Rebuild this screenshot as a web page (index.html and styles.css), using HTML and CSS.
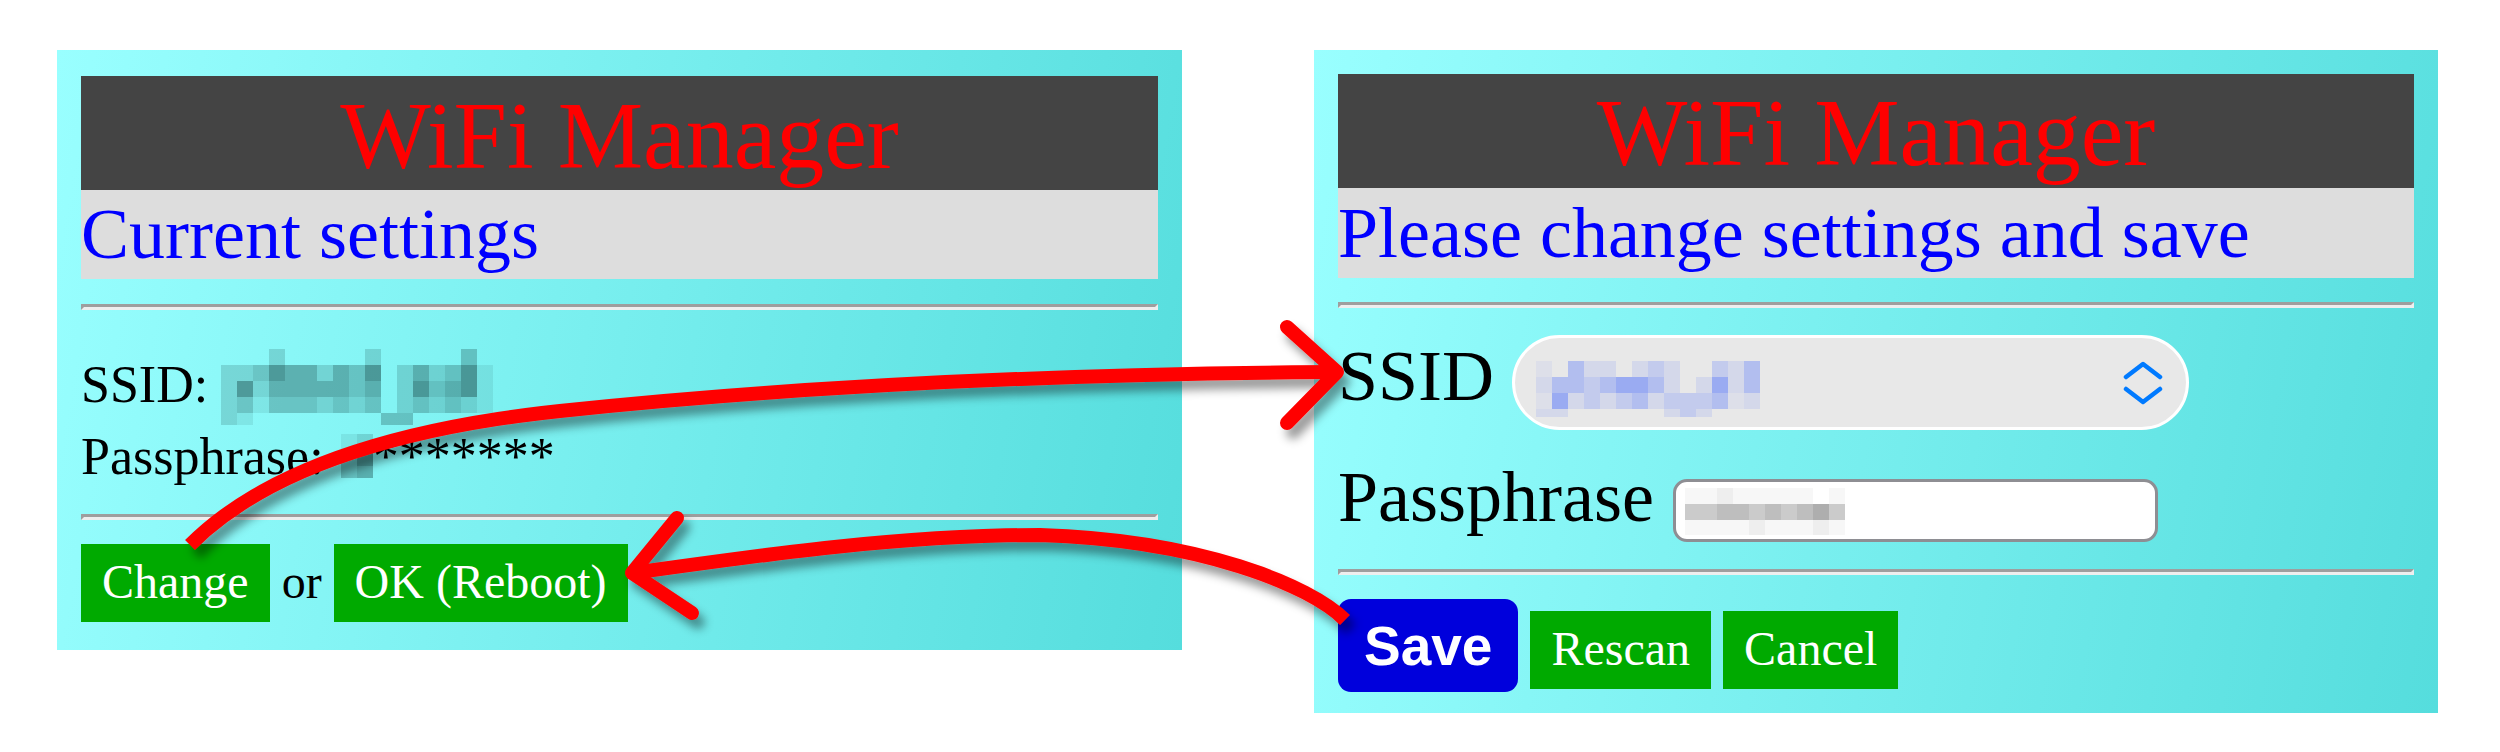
FILE: index.html
```html
<!DOCTYPE html>
<html lang="en">
<head>
<meta charset="utf-8">
<title>WiFi Manager</title>
<link rel="stylesheet" href="styles.css">
</head>
<body>
<div class="stage">
  <section class="panel panel-left">
    <h1 class="title">WiFi Manager</h1>
    <h2 class="subtitle">Current settings</h2>
    <hr class="rule rule-top">
    <div class="info">
      <div class="info-line">SSID: <svg class="mosaic mosaic-ssid mz-teal" width="272" height="76" viewBox="0 0 272 76">
        <rect x="48" y="0" width="16" height="16" class="l2"/><rect x="144" y="0" width="16" height="16" class="l2"/><rect x="240" y="0" width="16" height="16" class="l3"/>
        <rect x="0" y="16" width="16" height="16" class="l2"/><rect x="16" y="16" width="16" height="16" class="l2"/><rect x="32" y="16" width="16" height="16" class="l3"/><rect x="48" y="16" width="16" height="16" class="l5"/><rect x="64" y="16" width="16" height="16" class="l4"/><rect x="80" y="16" width="16" height="16" class="l4"/><rect x="96" y="16" width="16" height="16" class="l2"/><rect x="112" y="16" width="16" height="16" class="l4"/><rect x="128" y="16" width="16" height="16" class="l3"/><rect x="144" y="16" width="16" height="16" class="l5"/><rect x="176" y="16" width="16" height="16" class="l2"/><rect x="192" y="16" width="16" height="16" class="l4"/><rect x="208" y="16" width="16" height="16" class="l2"/><rect x="224" y="16" width="16" height="16" class="l3"/><rect x="240" y="16" width="16" height="16" class="l5"/><rect x="256" y="16" width="16" height="16" class="l1"/>
        <rect x="0" y="32" width="16" height="16" class="l2"/><rect x="16" y="32" width="16" height="16" class="l5"/><rect x="32" y="32" width="16" height="16" class="l2"/><rect x="48" y="32" width="16" height="16" class="l4"/><rect x="64" y="32" width="16" height="16" class="l4"/><rect x="80" y="32" width="16" height="16" class="l4"/><rect x="96" y="32" width="16" height="16" class="l4"/><rect x="112" y="32" width="16" height="16" class="l4"/><rect x="128" y="32" width="16" height="16" class="l3"/><rect x="144" y="32" width="16" height="16" class="l4"/><rect x="176" y="32" width="16" height="16" class="l2"/><rect x="192" y="32" width="16" height="16" class="l5"/><rect x="208" y="32" width="16" height="16" class="l3"/><rect x="224" y="32" width="16" height="16" class="l4"/><rect x="240" y="32" width="16" height="16" class="l5"/><rect x="256" y="32" width="16" height="16" class="l1"/>
        <rect x="0" y="48" width="16" height="16" class="l2"/><rect x="16" y="48" width="16" height="16" class="l3"/><rect x="32" y="48" width="16" height="16" class="l1"/><rect x="48" y="48" width="16" height="16" class="l3"/><rect x="64" y="48" width="16" height="16" class="l3"/><rect x="80" y="48" width="16" height="16" class="l3"/><rect x="96" y="48" width="16" height="16" class="l2"/><rect x="112" y="48" width="16" height="16" class="l3"/><rect x="128" y="48" width="16" height="16" class="l2"/><rect x="144" y="48" width="16" height="16" class="l3"/><rect x="176" y="48" width="16" height="16" class="l2"/><rect x="192" y="48" width="16" height="16" class="l3"/><rect x="208" y="48" width="16" height="16" class="l2"/><rect x="224" y="48" width="16" height="16" class="l3"/><rect x="240" y="48" width="16" height="16" class="l2"/><rect x="256" y="48" width="16" height="16" class="l1"/>
        <rect x="0" y="64" width="16" height="12" class="l2"/><rect x="16" y="64" width="16" height="12" class="l1"/><rect x="160" y="64" width="16" height="12" class="l3"/><rect x="176" y="64" width="16" height="12" class="l3"/>
      </svg></div>
      <div class="info-line">Passphrase: <svg class="mosaic mosaic-pass mz-teal" width="32" height="44" viewBox="0 0 32 44">
        <rect x="0" y="0" width="16" height="16" class="l1"/><rect x="16" y="0" width="16" height="16" class="l2"/>
        <rect x="0" y="16" width="16" height="16" class="l3"/><rect x="16" y="16" width="16" height="16" class="l5"/>
        <rect x="0" y="32" width="16" height="12" class="l3"/><rect x="16" y="32" width="16" height="12" class="l4"/>
      </svg>*******</div>
    </div>
    <hr class="rule rule-mid">
    <div class="actions-left"><span class="btn">Change</span> or <span class="btn">OK (Reboot)</span></div>
  </section>

  <section class="panel panel-right">
    <h1 class="title">WiFi Manager</h1>
    <h2 class="subtitle">Please change settings and save</h2>
    <hr class="rule rule-top-right">
    <div class="field">
      <span class="label ssid-label">SSID</span>
      <div class="select">
        <svg class="select-value mz-blue" width="224" height="56" viewBox="0 0 224 56">
          <rect x="0" y="0" width="16" height="16" class="l1"/><rect x="32" y="0" width="16" height="16" class="l4"/><rect x="48" y="0" width="16" height="16" class="l2"/><rect x="64" y="0" width="16" height="16" class="l2"/><rect x="96" y="0" width="16" height="16" class="l2"/><rect x="112" y="0" width="16" height="16" class="l3"/><rect x="128" y="0" width="16" height="16" class="l2"/><rect x="176" y="0" width="16" height="16" class="l3"/><rect x="192" y="0" width="16" height="16" class="l2"/><rect x="208" y="0" width="16" height="16" class="l4"/>
          <rect x="0" y="16" width="16" height="16" class="l2"/><rect x="16" y="16" width="16" height="16" class="l4"/><rect x="32" y="16" width="16" height="16" class="l4"/><rect x="48" y="16" width="16" height="16" class="l3"/><rect x="64" y="16" width="16" height="16" class="l4"/><rect x="80" y="16" width="16" height="16" class="l5"/><rect x="96" y="16" width="16" height="16" class="l5"/><rect x="112" y="16" width="16" height="16" class="l4"/><rect x="128" y="16" width="16" height="16" class="l2"/><rect x="160" y="16" width="16" height="16" class="l2"/><rect x="176" y="16" width="16" height="16" class="l5"/><rect x="192" y="16" width="16" height="16" class="l2"/><rect x="208" y="16" width="16" height="16" class="l4"/>
          <rect x="0" y="32" width="16" height="16" class="l1"/><rect x="16" y="32" width="16" height="16" class="l5"/><rect x="32" y="32" width="16" height="16" class="l2"/><rect x="48" y="32" width="16" height="16" class="l3"/><rect x="64" y="32" width="16" height="16" class="l2"/><rect x="80" y="32" width="16" height="16" class="l3"/><rect x="96" y="32" width="16" height="16" class="l4"/><rect x="112" y="32" width="16" height="16" class="l2"/><rect x="128" y="32" width="16" height="16" class="l3"/><rect x="144" y="32" width="16" height="16" class="l3"/><rect x="160" y="32" width="16" height="16" class="l3"/><rect x="176" y="32" width="16" height="16" class="l4"/><rect x="192" y="32" width="16" height="16" class="l1"/><rect x="208" y="32" width="16" height="16" class="l2"/>
          <rect x="0" y="48" width="16" height="8" class="l2"/><rect x="16" y="48" width="16" height="8" class="l2"/><rect x="128" y="48" width="16" height="8" class="l2"/><rect x="144" y="48" width="16" height="8" class="l3"/><rect x="160" y="48" width="16" height="8" class="l2"/>
        </svg>
        <svg class="chevron" width="40" height="44" viewBox="0 0 40 44"><path d="M3 16 L20 3 L37 16 M3 28 L20 41 L37 28" fill="none" stroke="#007aff" stroke-width="4.5" stroke-linecap="round" stroke-linejoin="round"/></svg>
      </div>
    </div>
    <div class="field">
      <span class="label">Passphrase</span>
      <div class="pass-input">
        <svg class="mz-gray" width="160" height="47" viewBox="0 0 160 47">
          <rect x="0" y="0" width="16" height="16" class="l1"/><rect x="16" y="0" width="16" height="16" class="l1"/><rect x="32" y="0" width="16" height="16" class="l2"/><rect x="48" y="0" width="16" height="16" class="l1"/><rect x="64" y="0" width="16" height="16" class="l1"/><rect x="80" y="0" width="16" height="16" class="l1"/><rect x="96" y="0" width="16" height="16" class="l1"/><rect x="112" y="0" width="16" height="16" class="l1"/><rect x="144" y="0" width="16" height="16" class="l1"/>
          <rect x="0" y="16" width="16" height="16" class="l3"/><rect x="16" y="16" width="16" height="16" class="l3"/><rect x="32" y="16" width="16" height="16" class="l4"/><rect x="48" y="16" width="16" height="16" class="l4"/><rect x="64" y="16" width="16" height="16" class="l3"/><rect x="80" y="16" width="16" height="16" class="l4"/><rect x="96" y="16" width="16" height="16" class="l3"/><rect x="112" y="16" width="16" height="16" class="l4"/><rect x="128" y="16" width="16" height="16" class="l5"/><rect x="144" y="16" width="16" height="16" class="l3"/>
          <rect x="0" y="32" width="16" height="15" class="l1"/><rect x="16" y="32" width="16" height="15" class="l1"/><rect x="32" y="32" width="16" height="15" class="l1"/><rect x="48" y="32" width="16" height="15" class="l1"/><rect x="64" y="32" width="16" height="15" class="l2"/><rect x="80" y="32" width="16" height="15" class="l1"/><rect x="96" y="32" width="16" height="15" class="l1"/><rect x="112" y="32" width="16" height="15" class="l1"/><rect x="128" y="32" width="16" height="15" class="l2"/><rect x="144" y="32" width="16" height="15" class="l1"/>
        </svg>
      </div>
    </div>
    <hr class="rule rule-bottom-right">
    <div class="actions-right">
      <span class="btn-save">Save</span>
      <span class="btn">Rescan</span>
      <span class="btn">Cancel</span>
    </div>
  </section>

  <svg class="annotations" width="2500" height="752" viewBox="0 0 2500 752">
    <defs>
      <filter id="arrow-shadow" filterUnits="userSpaceOnUse" x="0" y="0" width="2500" height="752">
        <feDropShadow dx="6" dy="9" stdDeviation="5" flood-color="#000" flood-opacity="0.4"/>
      </filter>
    </defs>
    <g filter="url(#arrow-shadow)" fill="none" stroke="#ff0000" stroke-width="14">
      <path d="M190,545 C260,475 380,430 560,411 S1000,374 1337,372"/>
      <path d="M1287,327 L1337,372 L1287,423" stroke-linecap="round" stroke-linejoin="round"/>
      <path d="M1345,620 C1310,585 1200,540 1040,535 C900,535 760,555 632,573"/>
      <path d="M677,518 L632,573 L692,613" stroke-linecap="round" stroke-linejoin="round"/>
    </g>
  </svg>
</div>
</body>
</html>
```

FILE: styles.css
```css
html, body {
  margin: 0;
  padding: 0;
  background: #ffffff;
}

body {
  font-family: "Liberation Serif", "Times New Roman", serif;
  color: #000;
}

.stage {
  position: relative;
  width: 2500px;
  height: 752px;
  box-sizing: border-box;
  padding: 50px 0 0 57px;
  display: flex;
  align-items: flex-start;
  gap: 132px;
  overflow: hidden;
}

.panel {
  box-sizing: border-box;
  background: linear-gradient(100deg, #99ffff, #55dddd);
}

.panel-left {
  width: 1125px;
  height: 600px;
  padding: 26px 24px 0 24px;
}

.panel-right {
  width: 1124px;
  height: 663px;
  padding: 24px 24px 0 24px;
}

.title {
  margin: 0;
  height: 114px;
  box-sizing: border-box;
  line-height: 108px;
  background: #444444;
  color: #ff0000;
  font-size: 96px;
  font-weight: normal;
  text-align: center;
  white-space: nowrap;
}

.panel-left .title { padding-top: 6px; }
.panel-right .title { padding-top: 5px; }

.subtitle {
  margin: 0;
  background: #dddddd;
  color: #0000ff;
  font-size: 72px;
  font-weight: normal;
  white-space: nowrap;
}

.panel-left .subtitle { line-height: 89px; }
.panel-right .subtitle { line-height: 90px; }

.rule {
  display: block;
  height: 0;
  margin: 0;
  border-style: solid;
  border-width: 3px;
  border-color: #9e9e9e #eeeeee #eeeeee #9e9e9e;
}

.rule-top { margin-top: 25px; margin-bottom: 39px; }
.rule-mid { margin-top: 21px; }
.rule-top-right { margin-top: 24px; }
.rule-bottom-right { margin-top: 27px; }

.info {
  font-size: 52px;
  line-height: 72px;
}

.info-line {
  height: 72px;
  white-space: nowrap;
}

.mz-teal rect { fill: #1e5050; }
.mz-teal .l1 { fill-opacity: 0.1; }
.mz-teal .l2 { fill-opacity: 0.2; }
.mz-teal .l3 { fill-opacity: 0.3; }
.mz-teal .l4 { fill-opacity: 0.42; }
.mz-teal .l5 { fill-opacity: 0.56; }

.mz-blue rect { fill: #5a78fa; }
.mz-blue .l1 { fill-opacity: 0.07; }
.mz-blue .l2 { fill-opacity: 0.14; }
.mz-blue .l3 { fill-opacity: 0.26; }
.mz-blue .l4 { fill-opacity: 0.38; }
.mz-blue .l5 { fill-opacity: 0.55; }

.mz-gray rect { fill: #888888; }
.mz-gray .l1 { fill-opacity: 0.07; }
.mz-gray .l2 { fill-opacity: 0.14; }
.mz-gray .l3 { fill-opacity: 0.44; }
.mz-gray .l4 { fill-opacity: 0.55; }
.mz-gray .l5 { fill-opacity: 0.68; }

.mosaic {
  vertical-align: top;
}

.mosaic-ssid {
  margin-bottom: -4px;
}

.mosaic-pass {
  margin-top: 13px;
  margin-left: 4px;
}

.actions-left {
  margin-top: 24px;
  font-size: 48px;
  line-height: 76px;
  white-space: nowrap;
}

.btn {
  display: inline-block;
  background: #00aa00;
  color: #ffffff;
  font-size: 48px;
  padding: 0 21px 2px;
  line-height: 76px;
  white-space: nowrap;
}

.field {
  display: flex;
  align-items: flex-start;
  margin-top: 27px;
}

.label {
  font-size: 72px;
  line-height: 80px;
  white-space: nowrap;
}

.ssid-label {
  margin-top: 1px;
}

.select {
  margin-left: 18px;
  width: 677px;
  height: 95px;
  box-sizing: border-box;
  border: 3px solid #ffffff;
  border-radius: 48px;
  background: #e8e8e8;
  display: flex;
  align-items: center;
  padding-left: 21px;
}

.select-value {
  align-self: flex-start;
  margin-top: 23px;
}

.chevron {
  margin-left: auto;
  margin-right: 23px;
}

.pass-input {
  margin-left: 19px;
  margin-top: 22px;
  width: 485px;
  height: 63px;
  box-sizing: border-box;
  border: 3px solid #8e8e93;
  border-radius: 14px;
  background: #ffffff;
  padding: 6px 9px;
}

.pass-input svg {
  display: block;
}

.actions-right {
  display: flex;
  align-items: baseline;
  gap: 12px;
  margin-top: 24px;
}

.btn-save {
  display: inline-block;
  background: #0000dc;
  color: #ffffff;
  font-family: "Liberation Sans", Arial, sans-serif;
  font-weight: bold;
  font-size: 55px;
  line-height: 92px;
  padding: 1px 26px 0;
  border-radius: 13px;
}

.annotations {
  position: absolute;
  top: 0;
  left: 0;
  pointer-events: none;
}
```
